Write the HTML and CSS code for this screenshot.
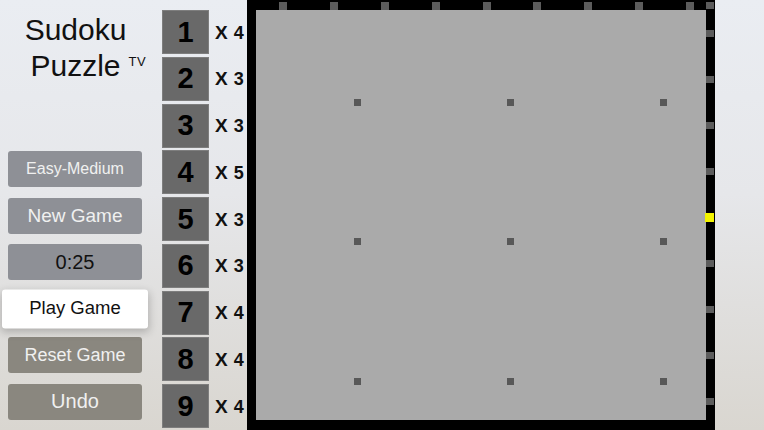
FILE: index.html
```html
<!DOCTYPE html>
<html lang="en">
<head>
    <meta charset="UTF-8">
    <meta name="viewport" content="width=device-width, initial-scale=1.0">
    <title>Sudoku Puzzle TV</title>
    <link rel="stylesheet" href="styles.css">
</head>
<body>
    <div class="side">
        <h1 class="title">
            <span class="line">Sudoku</span>
            <span class="line"><span class="brand">Puzzle<span class="tv">TV</span></span></span>
        </h1>
        <div class="menu">
            <button class="btn small">Easy-Medium</button>
            <button class="btn">New Game</button>
            <button class="btn timer">0:25</button>
            <button class="btn focused">Play Game</button>
            <button class="btn warm">Reset Game</button>
            <button class="btn warm">Undo</button>
        </div>
    </div>

    <div class="tiles">
        <div class="tile-row"><div class="tile">1</div><span class="count"><b>X</b> 4</span></div>
        <div class="tile-row"><div class="tile">2</div><span class="count"><b>X</b> 3</span></div>
        <div class="tile-row"><div class="tile">3</div><span class="count"><b>X</b> 3</span></div>
        <div class="tile-row"><div class="tile">4</div><span class="count"><b>X</b> 5</span></div>
        <div class="tile-row"><div class="tile">5</div><span class="count"><b>X</b> 3</span></div>
        <div class="tile-row"><div class="tile">6</div><span class="count"><b>X</b> 3</span></div>
        <div class="tile-row"><div class="tile">7</div><span class="count"><b>X</b> 4</span></div>
        <div class="tile-row"><div class="tile">8</div><span class="count"><b>X</b> 4</span></div>
        <div class="tile-row"><div class="tile">9</div><span class="count"><b>X</b> 4</span></div>
    </div>

    <div class="board">
        <div class="grid"></div>

        <!-- column / row guides on the frame -->
        <div class="marks-top">
            <i></i><i></i><i></i><i></i><i></i><i></i><i></i><i></i><i></i>
        </div>
        <div class="marks-right">
            <i></i><i></i><i></i><i></i><i class="cursor"></i><i></i><i></i><i></i><i></i>
        </div>
        <i class="corner"></i>

        <!-- box centre dots -->
        <div class="dots">
            <i></i><i></i><i></i>
            <i></i><i></i><i></i>
            <i></i><i></i><i></i>
        </div>
    </div>
</body>
</html>
```

FILE: styles.css
```css
body {
    margin: 0;
    width: 764px;
    height: 430px;
    overflow: hidden;
    display: flex;
    font-family: "Liberation Sans", Arial, sans-serif;
    background: linear-gradient(to bottom, #eaedf2 0%, #e6e7ea 45%, #d9d6d0 100%);
}

/* left column: title and menu */
.side {
    width: 155px;
    display: flex;
    flex-direction: column;
}
.title {
    margin: 12px 0 0;
    font-weight: normal;
    font-size: 30px;
    line-height: 36px;
    color: #111;
    text-align: center;
    padding-right: 4px;
}
.title .line {
    display: block;
}
.brand {
    position: relative;
}
.tv {
    position: absolute;
    left: 100%;
    top: -5px;
    margin-left: 8px;
    font-size: 13px;
    letter-spacing: 0.5px;
}

.menu {
    margin-top: 67px;
    display: flex;
    flex-direction: column;
    gap: 10.5px;
    padding-left: 8px;
}
.btn {
    width: 134px;
    height: 36px;
    border: none;
    border-radius: 3px;
    background: #8e9096;
    color: #f0f0f0;
    font-family: inherit;
    font-size: 19px;
    padding: 0;
}
.btn.small {
    font-size: 16px;
}
.btn.timer {
    color: #111;
    font-size: 20px;
}
.btn.focused {
    background: #fff;
    color: #111;
    font-size: 17px;
    transform: scale(1.09);
    box-shadow: 0 3px 8px rgba(0, 0, 0, 0.22);
}
.btn.warm {
    background: #8a877f;
    font-size: 18px;
}
.btn.warm + .btn.warm {
    font-size: 20px;
}

/* digit tiles with remaining counts */
.tiles {
    padding: 10px 0 0 7px;
    display: flex;
    flex-direction: column;
    gap: 2.75px;
}
.tile-row {
    display: flex;
    align-items: center;
}
.tile {
    width: 45px;
    height: 42px;
    border: 1px solid #7e7e7e;
    background: #696969;
    color: #000;
    font-weight: bold;
    font-size: 29px;
    display: flex;
    align-items: center;
    justify-content: center;
}
.count {
    width: 38px;
    padding: 1px 0 0 6px;
    box-sizing: border-box;
    font-size: 18px;
    font-weight: bold;
    color: #111;
    white-space: nowrap;
}
.count b {
    font-size: 19px;
    margin-right: 1px;
}

/* puzzle board */
.board {
    position: relative;
    width: 468px;
    height: 430px;
    box-sizing: border-box;
    padding: 10px 9px;
    background: #000;
}
.grid {
    height: 100%;
    background: #aaa;
}
.board i {
    display: block;
    background: #5c5c5c;
}
.marks-top {
    position: absolute;
    left: 32px;
    top: 2px;
    display: flex;
    gap: 42.9px;
}
.marks-top i {
    width: 8px;
    height: 8px;
}
.marks-right {
    position: absolute;
    left: 459px;
    top: 29.5px;
    display: flex;
    flex-direction: column;
    gap: 39.1px;
}
.marks-right i {
    width: 8px;
    height: 7px;
}
.marks-right i.cursor {
    width: 9px;
    height: 9px;
    margin: -1px 0 -1px -1px;
    background: #f4f400;
}
.board .corner {
    position: absolute;
    left: 459px;
    top: 2px;
    width: 8px;
    height: 7px;
}
.dots {
    position: absolute;
    left: 106.5px;
    top: 98.5px;
    display: grid;
    grid-template-columns: repeat(3, 7px);
    column-gap: 146px;
    row-gap: 132.5px;
}
.dots i {
    width: 7px;
    height: 7px;
    background: #585858;
}
```
